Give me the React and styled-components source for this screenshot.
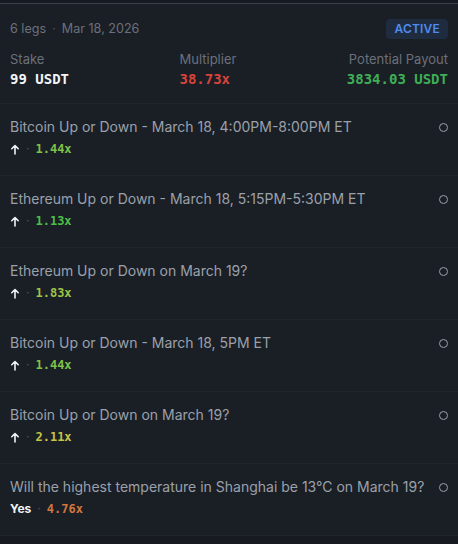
import React from 'react';
import styled, { createGlobalStyle } from 'styled-components';

const GlobalStyle = createGlobalStyle`
  html, body {
    margin: 0;
    padding: 0;
    background: #171a20;
  }
  body {
    font-family: Inter, "Noto Sans", sans-serif;
    -webkit-font-smoothing: antialiased;
  }
`;

const mono = `"DejaVu Sans Mono", "Liberation Mono", monospace`;

const Card = styled.div`
  margin-top: 3px;
  border-top: 1px solid #3a3f48;
  background: #1a1e25;
  width: 458px;
`;

const Header = styled.div`
  padding: 15px 10px 14px;
  border-bottom: 1px solid #20242b;
  display: flex;
  flex-direction: column;
  gap: 10px;
`;

const TopLine = styled.div`
  display: flex;
  align-items: center;
  justify-content: space-between;
`;

const Meta = styled.span`
  font-size: 12.6px;
  line-height: 20px;
  color: #6b717c;
`;

const Dot = styled.span`
  margin: 0 6px;
  color: #4c515b;
`;

const Badge = styled.span`
  background: #1f2b3f;
  color: #4d8cf0;
  font-size: 12px;
  font-weight: 600;
  line-height: 20px;
  padding: 0 8px;
  border-radius: 4px;
  letter-spacing: 0.2px;
`;

const Stats = styled.div`
  display: flex;
  justify-content: space-between;
`;

const Stat = styled.div`
  display: flex;
  flex-direction: column;
  align-items: ${({ $align }) => $align || 'flex-start'};
`;

const StatLabel = styled.span`
  font-size: 13px;
  line-height: 20px;
  color: #6b717c;
`;

const StatValue = styled.span`
  font-family: ${mono};
  font-weight: 700;
  font-size: 14px;
  line-height: 20px;
  color: ${({ $color }) => $color};
`;

const List = styled.ul`
  list-style: none;
  margin: 0;
  padding: 0;
`;

const Row = styled.li`
  display: flex;
  justify-content: space-between;
  padding: 13px 10px 16px;
  border-bottom: 1px solid #20242b;
`;

const RowBody = styled.div`
  display: flex;
  flex-direction: column;
  gap: 2px;
`;

const Title = styled.span`
  font-size: 14px;
  line-height: 20px;
  color: #9ba1ab;
`;

const Sub = styled.div`
  display: flex;
  align-items: center;
  line-height: 20px;
`;

const Pick = styled.span`
  color: #f1f3f5;
  font-size: 12px;
  font-weight: 700;
`;

const SubDot = styled.span`
  color: #4c515b;
  font-size: 12px;
  margin: 0 6px;
`;

const Odds = styled.span`
  font-family: ${mono};
  font-weight: 700;
  font-size: 12px;
  color: ${({ $color }) => $color};
`;

const Status = styled.span`
  box-sizing: border-box;
  width: 9px;
  height: 9px;
  margin-top: 6px;
  border: 1px solid #9aa0aa;
  border-radius: 50%;
  flex-shrink: 0;
`;

const Arrow = () => (
  <svg width="10" height="11" viewBox="0 0 10 11" fill="none" stroke="#f1f3f5" strokeWidth="1.6" strokeLinecap="round" strokeLinejoin="round">
    <path d="M5 10V1.5M1.8 4.7L5 1.5L8.2 4.7" />
  </svg>
);

const legs = [
  { title: 'Bitcoin Up or Down - March 18, 4:00PM-8:00PM ET', odds: '1.44x', color: '#7ec24a' },
  { title: 'Ethereum Up or Down - March 18, 5:15PM-5:30PM ET', odds: '1.13x', color: '#4cbf48' },
  { title: 'Ethereum Up or Down on March 19?', odds: '1.83x', color: '#9cc448' },
  { title: 'Bitcoin Up or Down - March 18, 5PM ET', odds: '1.44x', color: '#7ec24a' },
  { title: 'Bitcoin Up or Down on March 19?', odds: '2.11x', color: '#c9c345' },
  { title: 'Will the highest temperature in Shanghai be 13°C on March 19?', pick: 'Yes', odds: '4.76x', color: '#d0763e' },
];

export default function App() {
  return (
    <>
      <GlobalStyle />
      <Card>
        <Header>
          <TopLine>
            <Meta>
              6 legs<Dot>·</Dot>Mar 18, 2026
            </Meta>
            <Badge>ACTIVE</Badge>
          </TopLine>
          <Stats>
            <Stat>
              <StatLabel>Stake</StatLabel>
              <StatValue $color="#f3f4f6">99 USDT</StatValue>
            </Stat>
            <Stat>
              <StatLabel>Multiplier</StatLabel>
              <StatValue $color="#d6433a">38.73x</StatValue>
            </Stat>
            <Stat $align="flex-end">
              <StatLabel>Potential Payout</StatLabel>
              <StatValue $color="#3fae55">3834.03 USDT</StatValue>
            </Stat>
          </Stats>
        </Header>
        <List>
          {legs.map((leg, i) => (
            <Row key={i}>
              <RowBody>
                <Title>{leg.title}</Title>
                <Sub>
                  {leg.pick ? <Pick>{leg.pick}</Pick> : <Arrow />}
                  <SubDot>·</SubDot>
                  <Odds $color={leg.color}>{leg.odds}</Odds>
                </Sub>
              </RowBody>
              <Status />
            </Row>
          ))}
        </List>
      </Card>
    </>
  );
}
